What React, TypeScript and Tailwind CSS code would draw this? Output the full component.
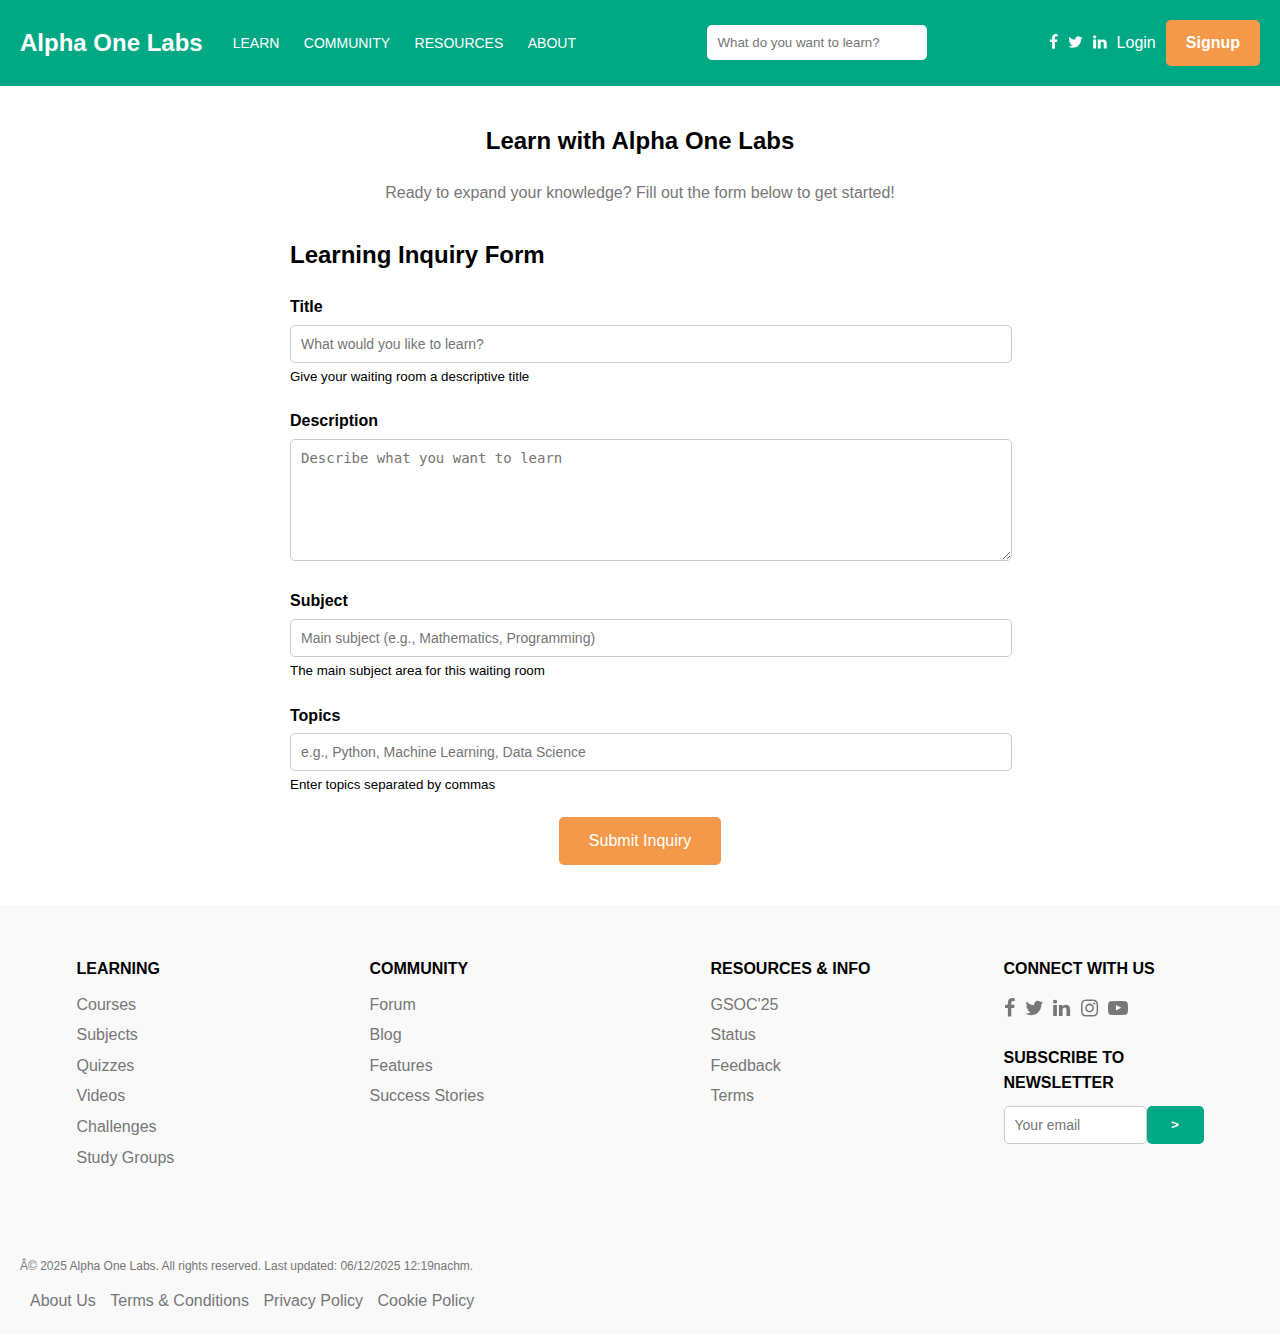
import React from "react";

const GLYPHS = {
  facebook: {
    x: 384,
    w: 1024,
    d: "M1343 12v264h-157q-86 0-116 36t-30 108v189h293l-39 296h-254v759h-306v-759h-255v-296h255v-218q0-186 104-288.5t277-102.5q147 0 228 12z",
  },
  twitter: {
    x: 64,
    w: 1664,
    d: "M1684 408q-67 98-162 167 1 14 1 42 0 130-38 259.5t-115.5 248.5-184.5 210.5-258 146-323 54.5q-271 0-496-145 35 4 78 4 225 0 401-138-105-2-188-64.5t-114-159.5q33 5 61 5 43 0 85-11-112-23-185.5-111.5t-73.5-205.5v-4q68 38 146 41-66-44-105-115t-39-154q0-88 44-163 121 149 294.5 238.5t371.5 99.5q-8-38-8-74 0-134 94.5-228.5t228.5-94.5q140 0 236 102 109-21 205-78-37 115-142 178 93-10 186-50z",
  },
  linkedin: {
    x: 128,
    w: 1536,
    d: "M477 625v991h-330v-991h330zm21-306q1 73-50.5 122t-135.5 49h-2q-82 0-132-49t-50-122q0-74 51.5-122.5t134.5-48.5 133 48.5 51 122.5zm1166 729v568h-329v-530q0-105-40.5-164.5t-126.5-59.5q-63 0-105.5 34.5t-63.5 85.5q-11 30-11 81v553h-329q2-399 2-647t-1-296l-1-48h329v144h-2q20-32 41-56t56.5-52 87-43.5 114.5-15.5q171 0 275 113.5t104 332.5z",
  },
  instagram: {
    x: 128,
    w: 1536,
    d: "M1152 896q0-106-75-181t-181-75-181 75-75 181 75 181 181 75 181-75 75-181zm138 0q0 164-115 279t-279 115-279-115-115-279 115-279 279-115 279 115 115 279zm108-410q0 38-27 65t-65 27-65-27-27-65 27-65 65-27 65 27 27 65zm-502-220q-7 0-76.5-.5t-105.5 0-96.5 3-103 10-71.5 18.5q-50 20-88 58t-58 88q-11 29-18.5 71.5t-10 103-3 96.5 0 105.5.5 76.5-.5 76.5 0 105.5 3 96.5 10 103 18.5 71.5q20 50 58 88t88 58q29 11 71.5 18.5t103 10 96.5 3 105.5 0 76.5-.5 76.5.5 105.5 0 96.5-3 103-10 71.5-18.5q50-20 88-58t58-88q11-29 18.5-71.5t10-103 3-96.5 0-105.5-.5-76.5.5-76.5 0-105.5-3-96.5-10-103-18.5-71.5q-20-50-58-88t-88-58q-29-11-71.5-18.5t-103-10-96.5-3-105.5 0-76.5.5zm768 630q0 229-5 317-10 208-124 322t-322 124q-88 5-317 5t-317-5q-208-10-322-124t-124-322q-5-88-5-317t5-317q10-208 124-322t322-124q88-5 317-5t317 5q208 10 322 124t124 322q5 88 5 317z",
  },
  youtube: {
    x: 0,
    w: 1792,
    d: "M711 1128l484-250-484-253v503zm185-862q168 0 324.5 4.5t229.5 9.5l73 4q1 0 17 1.5t23 3 23.5 4.5 28.5 8 28 13 31 19.5 29 26.5q6 6 15.5 18.5t29 58.5 26.5 101q8 64 12.5 136.5t5.5 113.5v176q1 145-18 290-7 55-25 99.5t-32 61.5l-14 17q-14 15-29 26.5t-31 19-28 12.5-28.5 8-24 4.5-23 3-16.5 1.5q-251 19-627 19-207-2-359.5-6.5t-200.5-7.5l-49-4-36-4q-36-5-54.5-10t-51-21-56.5-41q-6-6-15.5-18.5t-29-58.5-26.5-101q-8-64-12.5-136.5t-5.5-113.5v-176q-1-145 18-290 7-55 25-99.5t32-61.5l14-17q14-15 29-26.5t31-19.5 28-13 28.5-8 23.5-4.5 23-3 17-1.5q251-18 627-18z",
  },
};

function Icon({ name, size }: { name: keyof typeof GLYPHS; size: number }) {
  const g = GLYPHS[name];
  return (
    <a href="#" aria-label={name} className="block">
      <svg
        width={(size * g.w) / 1792}
        height={size}
        viewBox={`${g.x} 0 ${g.w} 1792`}
        fill="currentColor"
        className="block overflow-visible"
      >
        <path d={g.d} />
      </svg>
    </a>
  );
}

const inputClass =
  "block h-[38px] w-[722px] rounded-[5px] border border-[#ccc] bg-white px-2.5 text-[14px] leading-4 placeholder:text-[#757575] outline-none";

function Field({ label, placeholder, help }: { label: string; placeholder: string; help: string }) {
  return (
    <div className="mb-5">
      <label className="mb-[5px] block font-bold">{label}</label>
      <input className={inputClass} placeholder={placeholder} />
      <div className="h-[25.6px] text-[13.333px] leading-[28.6px]">{help}</div>
    </div>
  );
}

function LinkColumn({ title, links, width }: { title: string; links: string[]; width: string }) {
  return (
    <div className={width}>
      <h3 className="mb-2.5 font-bold">{title}</h3>
      <ul>
        {links.map((l) => (
          <li key={l} className="mb-[5px] text-[#777]">
            <a href="#">{l}</a>
          </li>
        ))}
      </ul>
    </div>
  );
}

export default function App() {
  return (
    <div className="bg-white font-['Liberation_Sans',Arial,sans-serif] text-[16px] leading-[25.6px] text-black">
      <header className="flex h-[85.6px] items-center justify-between bg-[#00a884] px-5 text-white">
        <div className="flex items-center">
          <div className="text-[24px] font-bold leading-[38.4px]">Alpha One Labs</div>
          <nav className="ml-[30px] mr-2.5 flex gap-[24.45px] pt-[1.6px] text-[14px]">
            <a href="#">LEARN</a>
            <a href="#">COMMUNITY</a>
            <a href="#">RESOURCES</a>
            <a href="#">ABOUT</a>
          </nav>
        </div>
        <input
          className="h-[35px] w-[220px] rounded-[5px] bg-white px-2.5 text-[13.333px] placeholder:text-[#757575] outline-none"
          placeholder="What do you want to learn?"
        />
        <div className="flex items-center gap-2.5">
          <div className="flex gap-2.5 pb-[1.6px]">
            <Icon name="facebook" size={16} />
            <Icon name="twitter" size={16} />
            <Icon name="linkedin" size={16} />
          </div>
          <a href="#">Login</a>
          <a href="#" className="rounded-[5px] bg-[#f4994a] px-5 py-2.5 font-bold">
            Signup
          </a>
        </div>
      </header>

      <main className="mx-auto w-[700px] pb-10 pt-9">
        <h1 className="text-center text-[24px] font-bold leading-[38.4px]">Learn with Alpha One Labs</h1>
        <p className="mt-5 text-center text-[#777]">
          Ready to expand your knowledge? Fill out the form below to get started!
        </p>
        <h2 className="mt-[30px] text-[24px] font-bold leading-[38.4px]">Learning Inquiry Form</h2>
        <form className="mt-5">
          <Field label="Title" placeholder="What would you like to learn?" help="Give your waiting room a descriptive title" />
          <div className="mb-[27.6px]">
            <label className="mb-[5px] block font-bold">Description</label>
            <textarea
              className="block h-[122px] w-[722px] resize rounded-[5px] border border-[#ccc] bg-white p-2.5 font-['DejaVu_Sans_Mono',monospace] text-[14px] leading-4 placeholder:text-[#757575] outline-none"
              placeholder="Describe what you want to learn"
            />
          </div>
          <Field label="Subject" placeholder="Main subject (e.g., Mathematics, Programming)" help="The main subject area for this waiting room" />
          <Field label="Topics" placeholder="e.g., Python, Machine Learning, Data Science" help="Enter topics separated by commas" />
          <button type="button" className="mx-auto block h-12 w-[162px] rounded-[5px] bg-[#f4994a] text-white">
            Submit Inquiry
          </button>
        </form>
      </main>

      <footer className="h-[429px] bg-[#f9f9f9] px-5 pt-[51.2px]">
        <div className="flex h-[301px] justify-around">
          <LinkColumn
            width="w-[180px]"
            title="LEARNING"
            links={["Courses", "Subjects", "Quizzes", "Videos", "Challenges", "Study Groups"]}
          />
          <LinkColumn width="w-[228px]" title="COMMUNITY" links={["Forum", "Blog", "Features", "Success Stories"]} />
          <LinkColumn width="w-[180px]" title="RESOURCES & INFO" links={["GSOC'25", "Status", "Feedback", "Terms"]} />
          <div className="w-[200px]">
            <h3 className="font-bold">CONNECT WITH US</h3>
            <div className="mt-[16.2px] flex gap-2.5 text-[#777]">
              <Icon name="facebook" size={20} />
              <Icon name="twitter" size={20} />
              <Icon name="linkedin" size={20} />
              <Icon name="instagram" size={20} />
              <Icon name="youtube" size={20} />
            </div>
            <h3 className="mt-[27px] font-bold">
              SUBSCRIBE TO
              <br />
              NEWSLETTER
            </h3>
            <div className="mt-2.5 flex">
              <input
                className="h-[38px] w-[143px] rounded-[5px] border border-[#ccc] bg-white px-2.5 text-[14px] placeholder:text-[#757575] outline-none"
                placeholder="Your email"
              />
              <button type="button" className="h-[38px] w-[57px] rounded-[5px] bg-[#00a884] text-[13.333px] font-bold text-white">
                &gt;
              </button>
            </div>
          </div>
        </div>
        <p className="text-[12px] leading-[19.2px] text-[#777]">
          Â© 2025 Alpha One Labs. All rights reserved. Last updated: 06/12/2025 12:19nachm.
        </p>
        <div className="ml-2.5 mt-3 flex gap-[14.45px] text-[#777]">
          <a href="#">About Us</a>
          <a href="#">Terms &amp; Conditions</a>
          <a href="#">Privacy Policy</a>
          <a href="#">Cookie Policy</a>
        </div>
      </footer>
    </div>
  );
}
